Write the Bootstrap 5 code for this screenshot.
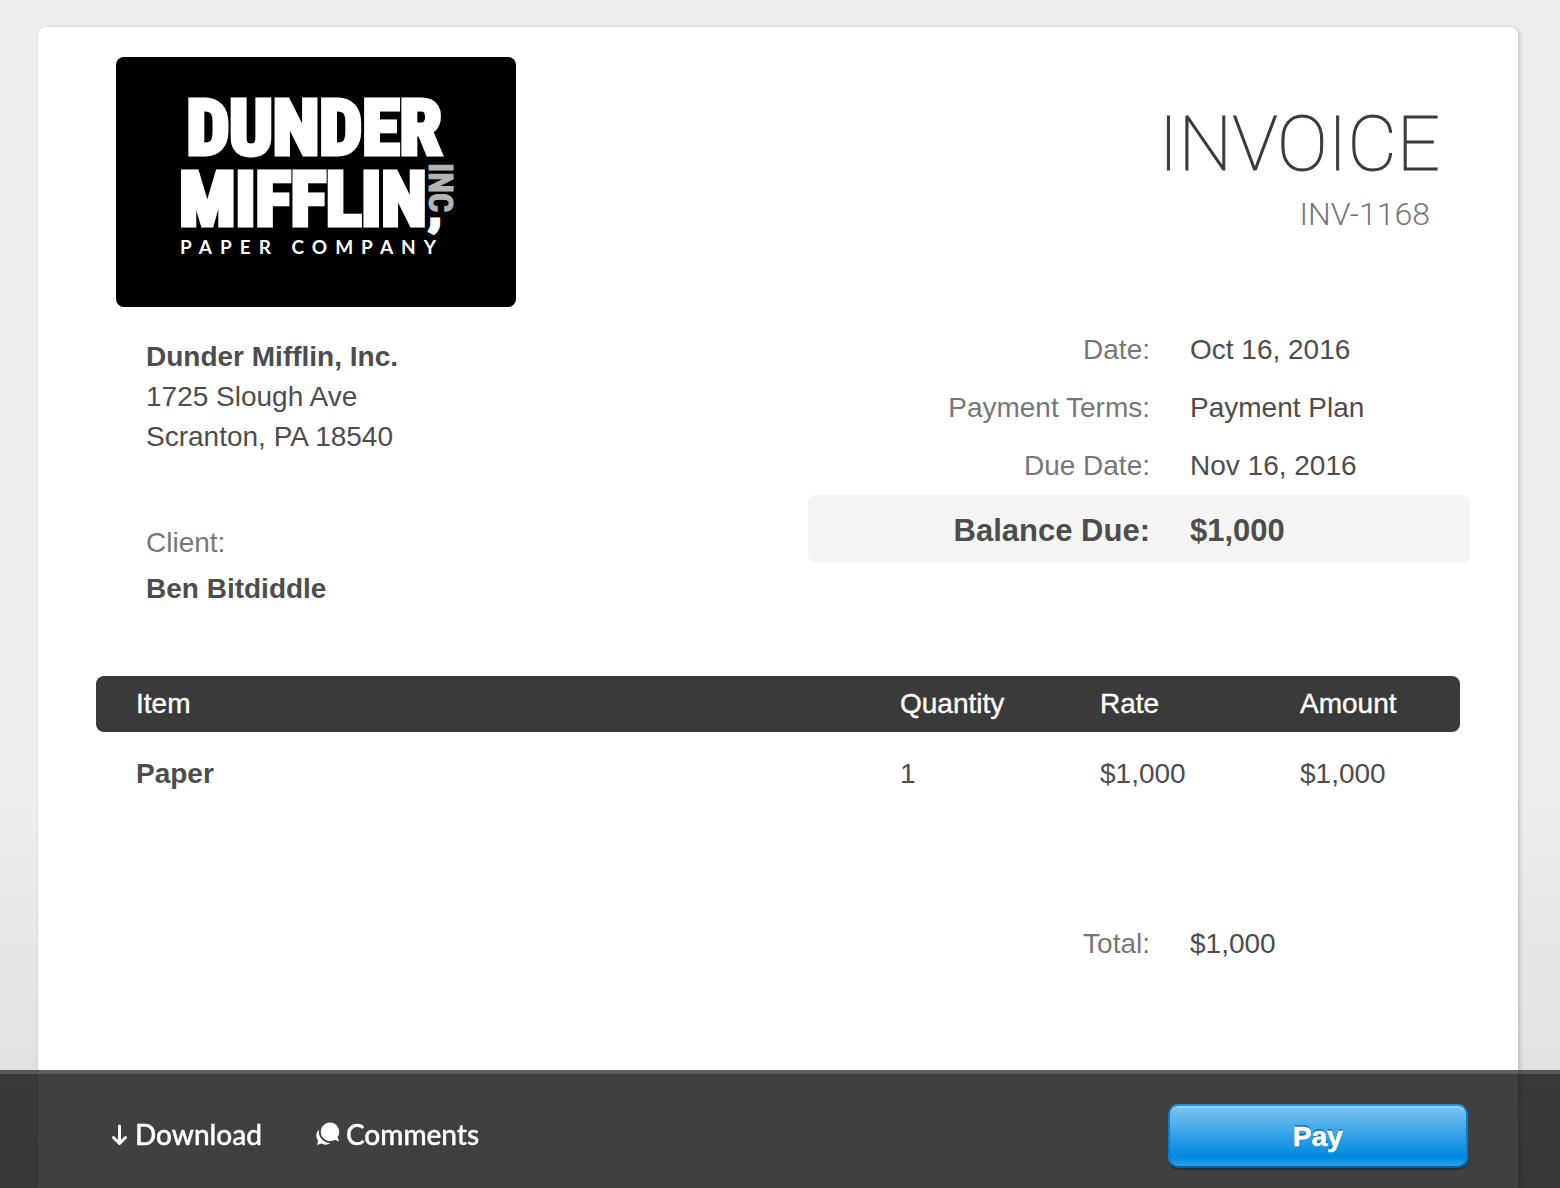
<!DOCTYPE html>
<html lang="en">
<head>
<meta charset="utf-8">
<meta name="viewport" content="width=device-width, initial-scale=1">
<title>Invoice INV-1168</title>
<link href="https://cdn.jsdelivr.net/npm/bootstrap@5.3.0/dist/css/bootstrap.min.css" rel="stylesheet">
<style>
body{font-family:"Liberation Sans",Arial,sans-serif;font-size:28px;line-height:40px;color:#4d4d4d;min-height:100vh;background:#eee linear-gradient(#eee 0,#eee 800px,#dcdcdc 1188px) no-repeat}
.sheet{margin:27px 42px 0 38px;padding:30px 48px 118px 58px;min-height:calc(100vh - 27px);background:#fff;border-radius:8px 8px 0 0;box-shadow:0 0 3px rgba(0,0,0,.06),2px 1px 4px rgba(0,0,0,.16)}
.logo{width:400px;height:250px;border-radius:8px}
.seller{padding-left:20px}
.party{padding:30px 0 0 30px}
.party address{line-height:inherit}
.client{margin:66px 0 6px}
.muted{color:#777}
.summary{width:662px}
.doc-title{font-family:Roboto,sans-serif;font-weight:100;font-size:76px;line-height:90px;color:#3a3a3a;margin:42px 30px 0 0;-webkit-text-stroke:1px #3a3a3a}
.doc-number{font-family:Roboto,sans-serif;font-weight:300;font-size:32px;color:#777;margin:5px 40px 87px 0}
.line-row{height:58px;display:flex;align-items:center;gap:40px}
.line-row dt{width:342px;text-align:right;font-weight:400;color:#777}
.line-row dd{margin:0}
.line-row.due{height:68px;background:#f5f5f5;border-radius:8px;font-size:31px;font-weight:700;padding-top:3px}
.line-row.due dt{font-weight:700;color:#4d4d4d}
.items{margin:67px 10px 0 0}
.items table{width:100%;table-layout:fixed}
.items th,.items td{padding:8px 0 8px 40px}
.items thead th{background:#3a3a3a;color:#fff;font-weight:400;-webkit-text-stroke:.4px #fff}
.items thead th:first-child{border-radius:8px 0 0 8px}
.items thead th:last-child{border-radius:0 8px 8px 0}
.items tbody th,.items tbody td{padding-top:22px}
.items .num{width:200px}
.total{margin:113px 0 0}
.actions{background:rgba(0,0,0,.75);padding:30px 92px 20px 110px;border-top:4px solid rgba(255,255,255,.15);font-family:Lato,sans-serif}
.action-list{gap:54px;padding-bottom:4px}
.action-link{color:#fff;text-decoration:none;display:inline-flex;align-items:center;font-weight:500;gap:6px;-webkit-text-stroke:.4px #fff}
.pay{width:300px;height:64px;padding:2px 0 0;border:2px solid;border-color:#1f94e0 #0d7cc8 #0561a3;border-radius:10px;color:#fff;font:700 28px/40px "Liberation Sans",Arial,sans-serif;-webkit-text-stroke:.6px #fff;text-shadow:0 -2px 0 rgba(0,60,110,.5);background:linear-gradient(#7cc4f0,#0089e0 84%,#2a9fe6);background-clip:padding-box;background-color:#1388d6;box-shadow:inset 0 2px 0 rgba(255,255,255,.28),0 2px 1px rgba(0,0,0,.3)}
</style>
</head>
<body>
<main class="sheet">
  <div class="d-flex justify-content-between align-items-start">
    <section class="seller">
      <svg class="logo d-block" viewBox="0 0 400 250" role="img" aria-label="Dunder Mifflin, Inc. Paper Company">
        <rect width="400" height="250" fill="#000"/>
        <g fill="#fff" stroke="#fff" stroke-width="5" font-family="Impact,'Roboto Condensed','Liberation Sans Narrow',sans-serif" font-weight="700">
          <text x="198" y="97" text-anchor="middle" font-size="76">DUNDER</text>
          <text x="187" y="168" text-anchor="middle" font-size="74">MIFFLIN</text>
          <text x="314" y="168" font-size="40">,</text>
        </g>
        <text transform="translate(313 106) rotate(90)" fill="#b5b3b3" stroke="#b5b3b3" font-family="Impact,'Roboto Condensed',sans-serif" font-weight="700" font-size="34">INC</text>
        <text x="64" y="197" fill="#fff" font-family="Lato,sans-serif" font-weight="700" font-size="19" letter-spacing="8">PAPER COMPANY</text>
      </svg>
      <div class="party">
        <address class="m-0"><strong>Dunder Mifflin, Inc.</strong><br>1725 Slough Ave<br>Scranton, PA 18540</address>
        <div class="client muted">Client:</div>
        <strong class="d-block">Ben Bitdiddle</strong>
      </div>
    </section>
    <section class="summary">
      <h1 class="doc-title text-end">INVOICE</h1>
      <p class="doc-number text-end">INV-1168</p>
      <dl class="m-0">
        <div class="line-row"><dt>Date:</dt><dd>Oct 16, 2016</dd></div>
        <div class="line-row"><dt>Payment Terms:</dt><dd>Payment Plan</dd></div>
        <div class="line-row"><dt>Due Date:</dt><dd>Nov 16, 2016</dd></div>
        <div class="line-row due"><dt>Balance Due:</dt><dd>$1,000</dd></div>
      </dl>
    </section>
  </div>
  <div class="items">
    <table>
      <thead><tr><th scope="col">Item</th><th scope="col" class="num">Quantity</th><th scope="col" class="num">Rate</th><th scope="col" class="num">Amount</th></tr></thead>
      <tbody><tr><th scope="row">Paper</th><td>1</td><td>$1,000</td><td>$1,000</td></tr></tbody>
    </table>
  </div>
  <dl class="total d-flex justify-content-end">
    <div class="line-row summary"><dt>Total:</dt><dd>$1,000</dd></div>
  </dl>
</main>
<footer class="actions fixed-bottom d-flex justify-content-between align-items-center">
  <nav class="action-list d-flex" aria-label="Invoice actions">
    <a class="action-link" href="#download"><svg width="19" height="24" viewBox="0 0 19 24" fill="none" stroke="#fff" stroke-width="3" stroke-linecap="round" stroke-linejoin="round" aria-hidden="true"><path d="M9.500 4v17M3.500 15.500l6 6 6-6"/></svg>Download</a>
    <a class="action-link" href="#comments"><svg width="24" height="24" viewBox="0 0 24 24" fill="#fff" aria-hidden="true"><path d="M14 0.500A9.300 9.300 0 1 0 19 17.700L23 19.500 21.500 15A9.300 9.300 0 0 0 14 .5z"/><path d="M3 7.500A8 8 0 0 0 2 18.500L1.200 23l4.200-1.400A8.500 8.500 0 0 0 14.500 20.800 11.200 11.200 0 0 1 3 7.500z"/></svg>Comments</a>
  </nav>
  <button type="button" class="pay">Pay</button>
</footer>
<script src="https://cdn.jsdelivr.net/npm/bootstrap@5.3.0/dist/js/bootstrap.bundle.min.js"></script>
</body>
</html>
